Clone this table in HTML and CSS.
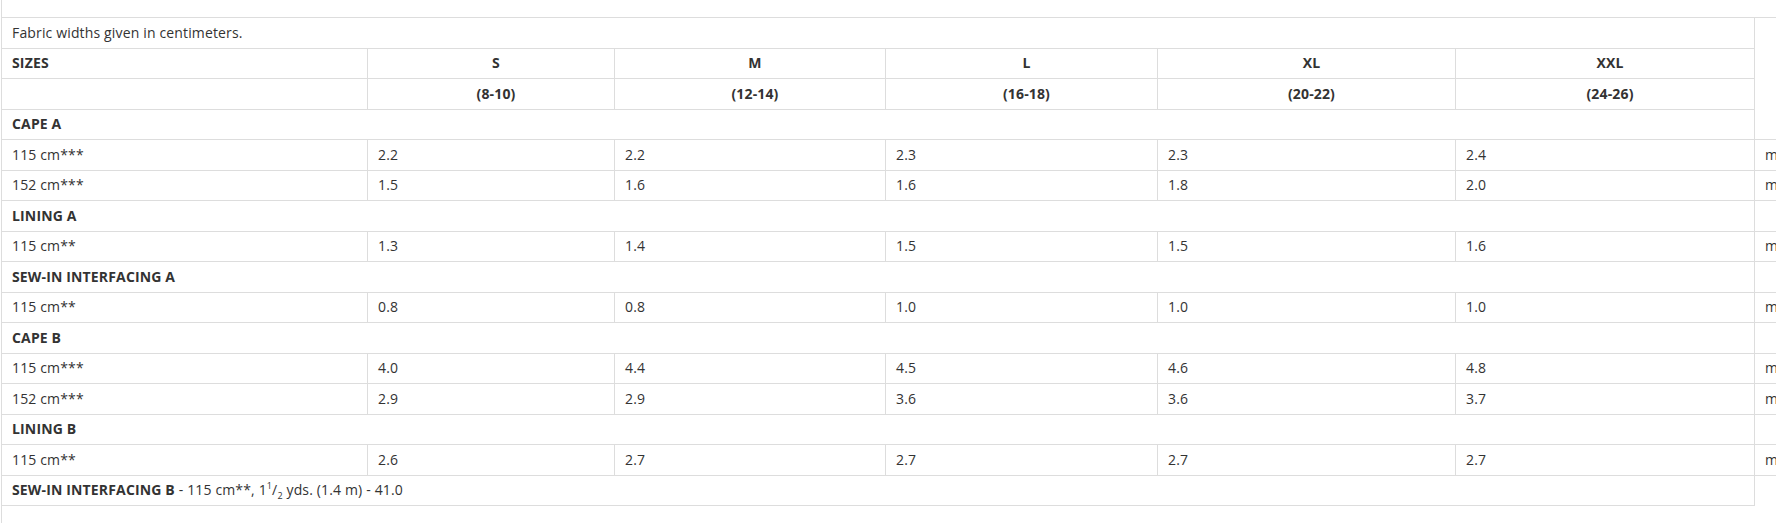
FILE: index.html
```html
<!DOCTYPE html>
<html>
<head>
<meta charset="utf-8">
<link rel="stylesheet" href="styles.css">
</head>
<body>
<div class="wrap">
<table class="yardage">
<colgroup>
<col class="c1"><col class="c2"><col class="c3"><col class="c4"><col class="c5"><col class="c6"><col class="c7">
</colgroup>
<tbody>
<tr><td colspan="6" class="note">Fabric widths given in centimeters.</td></tr>
<tr><th class="label">SIZES</th><th>S</th><th>M</th><th>L</th><th>XL</th><th>XXL</th></tr>
<tr><th class="label"></th><th>(8-10)</th><th>(12-14)</th><th>(16-18)</th><th>(20-22)</th><th>(24-26)</th></tr>
<tr><td colspan="6" class="section">CAPE A</td></tr>
<tr><td>115 cm***</td><td>2.2</td><td>2.2</td><td>2.3</td><td>2.3</td><td>2.4</td><td>m</td></tr>
<tr><td>152 cm***</td><td>1.5</td><td>1.6</td><td>1.6</td><td>1.8</td><td>2.0</td><td>m</td></tr>
<tr><td colspan="6" class="section">LINING A</td></tr>
<tr><td>115 cm**</td><td>1.3</td><td>1.4</td><td>1.5</td><td>1.5</td><td>1.6</td><td>m</td></tr>
<tr><td colspan="6" class="section">SEW-IN INTERFACING A</td></tr>
<tr><td>115 cm**</td><td>0.8</td><td>0.8</td><td>1.0</td><td>1.0</td><td>1.0</td><td>m</td></tr>
<tr><td colspan="6" class="section">CAPE B</td></tr>
<tr><td>115 cm***</td><td>4.0</td><td>4.4</td><td>4.5</td><td>4.6</td><td>4.8</td><td>m</td></tr>
<tr><td>152 cm***</td><td>2.9</td><td>2.9</td><td>3.6</td><td>3.6</td><td>3.7</td><td>m</td></tr>
<tr><td colspan="6" class="section">LINING B</td></tr>
<tr><td>115 cm**</td><td>2.6</td><td>2.7</td><td>2.7</td><td>2.7</td><td>2.7</td><td>m</td></tr>
<tr><td colspan="6"><b class="sec-inline">SEW-IN INTERFACING B</b> - 115 cm**, 1<sup class="frac">1</sup>/<sub class="frac">2</sub> yds. (1.4 m) - 41.0</td></tr>
</tbody>
</table>
</div>
</body>
</html>
```

FILE: styles.css
```css
html, body {
  margin: 0;
  padding: 0;
  background: #ffffff;
}

.wrap {
  margin-left: 1px;
  border-left: 1px solid #dddddd;
  height: 523px;
  padding-top: 17px;
  box-sizing: border-box;
  overflow: hidden;
  width: 1775px;
}

.yardage {
  border-collapse: collapse;
  table-layout: fixed;
  width: 1852px;
  margin-left: -1px;
  font-family: "Open Sans", "Liberation Sans", sans-serif;
  font-size: 14px;
  letter-spacing: 0.15px;
  color: #333333;
  border-top: 1px solid #dddddd;
}

.c1 { width: 366px; }
.c2 { width: 247px; }
.c3 { width: 271px; }
.c4 { width: 272px; }
.c5 { width: 298px; }
.c6 { width: 299px; }
.c7 { width: 99px; }

.yardage tr {
  height: 30.5px;
}

.yardage td,
.yardage th {
  border: 1px solid #dddddd;
  padding: 0 10px;
  text-align: left;
  vertical-align: middle;
  white-space: nowrap;
  font-weight: 400;
  line-height: 18px;
}

.yardage th {
  font-weight: 700;
  text-align: center;
  padding: 0 5px 0 15px;
}

.yardage th.label {
  text-align: left;
  padding: 0 10px;
}

.yardage td:last-child:not([colspan]) {
  border-right: none;
}

.yardage .section,
.yardage .sec-inline {
  font-weight: 700;
}

.frac {
  font-size: 9px;
  line-height: 0;
}
```
